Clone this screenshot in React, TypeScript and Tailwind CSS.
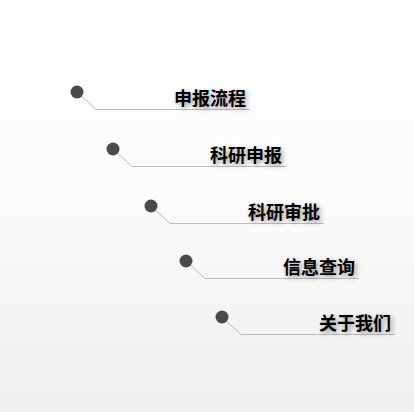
const items = [
  { label: "申报流程", indent: "ml-[70px]", top: "mt-[85px]" },
  { label: "科研申报", indent: "ml-[106px]", top: "mt-[32px]" },
  { label: "科研审批", indent: "ml-[144px]", top: "mt-[32px]" },
  { label: "信息查询", indent: "ml-[179px]", top: "mt-[30px]" },
  { label: "关于我们", indent: "ml-[215px]", top: "mt-[31px]" },
];

const Connector = () => (
  <svg width="26" height="25" viewBox="0 0 26 25" className="shrink-0">
    <line x1="7" y1="7" x2="26" y2="24.5" stroke="#b9b9b9" strokeWidth="1" />
    <circle cx="7" cy="7" r="6.5" fill="#4a4a4a" />
  </svg>
);

const MenuItem = ({ label, indent, top }: { label: string; indent: string; top: string }) => (
  <div className={`${indent} ${top} flex w-[180px] items-start`}>
    <Connector />
    <div className="flex h-[25px] flex-1 items-end justify-end border-b border-[#bdbdbd] pr-[4px] pb-[1px]">
      <span className="text-[18px] leading-[22px] font-bold text-black [text-shadow:2px_2px_5px_rgba(0,0,0,0.4)]">
        {label}
      </span>
    </div>
  </div>
);

const App = () => (
  <div className="h-[412px] w-[414px] overflow-hidden bg-gradient-to-b from-white via-[#fbfbfb] to-[#efefef] font-['Noto_Sans_CJK_SC','Noto_Sans',sans-serif]">
    <div className="flex flex-col">
      {items.map((item) => (
        <MenuItem key={item.label} {...item} />
      ))}
    </div>
  </div>
);

export default App;
